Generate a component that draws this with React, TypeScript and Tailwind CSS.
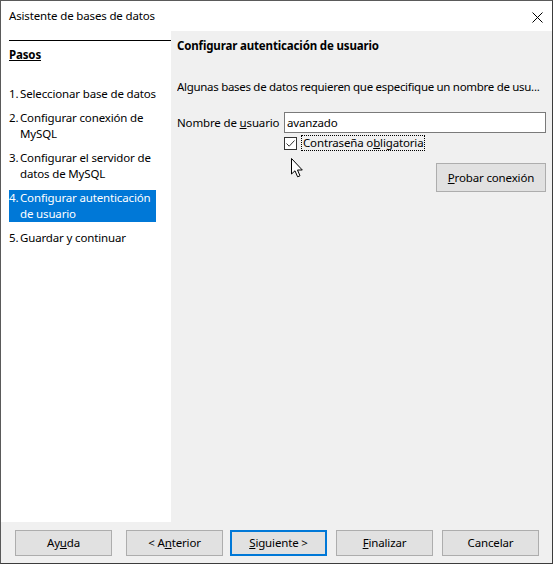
import React from 'react';

const font = { fontFamily: '"Noto Sans", "Open Sans", sans-serif' };

function Btn({ children, primary = false, className = '' }: { children: React.ReactNode; primary?: boolean; className?: string }) {
    return (
        <div
            className={`h-[26px] w-[97px] shrink-0 flex items-center justify-center bg-[#e1e1e1] text-black ${primary ? 'border-2 border-[#0078d7]' : 'border border-[#adadad]'} ${className}`}
        >
            {children}
        </div>
    );
}

const steps: { n: string; lines: string[]; active?: boolean }[] = [
    { n: '1.', lines: ['Seleccionar base de datos'] },
    { n: '2.', lines: ['Configurar conexión de', 'MySQL'] },
    { n: '3.', lines: ['Configurar el servidor de', 'datos de MySQL'] },
    { n: '4.', lines: ['Configurar autenticación', 'de usuario'], active: true },
    { n: '5.', lines: ['Guardar y continuar'] },
];

export default function App() {
    return (
        <div
            className="w-[553px] h-[564px] flex flex-col bg-white border border-[#5a5a5a] border-r-[#3c3c3c] border-b-[#3c3c3c] text-[11.5px] tracking-[-0.15px] leading-[16px] text-black overflow-hidden"
            style={font}
        >
            {/* Title bar */}
            <div className="h-[30px] shrink-0 flex items-center justify-between pl-[8px] pr-[9px] bg-white">
                <span>Asistente de bases de datos</span>
                <svg width="11" height="11" viewBox="0 0 11 11" className="mt-[2px]">
                    <path d="M0.5 0.5 L10.5 10.5 M10.5 0.5 L0.5 10.5" stroke="#000" strokeWidth="1" />
                </svg>
            </div>

            {/* Body */}
            <div className="flex-1 flex min-h-0">
                {/* Steps panel */}
                <div className="w-[170px] shrink-0 bg-white pl-[8px] flex flex-col">
                    <div className="mt-[9px] h-px bg-black" />
                    <div className="mt-[6px] font-bold underline">Pasos</div>
                    <div className="mt-[23px] w-[147px] flex flex-col gap-[8px]">
                        {steps.map((s) => (
                            <div key={s.n} className={`flex ${s.active ? 'bg-[#0078d7] text-white' : ''}`}>
                                <span className="w-[11px] shrink-0">{s.n}</span>
                                <div className="flex flex-col whitespace-nowrap">
                                    {s.lines.map((l) => (
                                        <span key={l}>{l}</span>
                                    ))}
                                </div>
                            </div>
                        ))}
                    </div>
                </div>

                {/* Content panel */}
                <div className="flex-1 min-w-0 bg-[#f0f0f0] pl-[6px] pr-[6px] pt-[7px] flex flex-col relative">
                    <div className="font-bold">Configurar autenticación de usuario</div>
                    <div className="mt-[25px] whitespace-nowrap overflow-hidden tracking-[-0.3px]">
                        Algunas bases de datos requieren que especifique un nombre de usu...
                    </div>
                    <div className="mt-[17px] flex items-center">
                        <span className="w-[107px] shrink-0 whitespace-nowrap">
                            Nombre de <span className="underline">u</span>suario
                        </span>
                        <div className="flex-1 min-w-0 h-[21px] bg-white border border-[#7a7a7a] flex items-center pl-[2px]">
                            avanzado
                        </div>
                    </div>
                    <div className="mt-[2px] ml-[107px] flex items-center h-[16px]">
                        <div className="w-[13px] h-[13px] shrink-0 bg-white border border-[#333] flex items-center justify-center">
                            <svg width="11" height="11" viewBox="0 0 11 11">
                                <path d="M1.5 5.5 L4.2 8.2 L9.5 2.5" stroke="#333" strokeWidth="1" fill="none" />
                            </svg>
                        </div>
                        <div className="ml-[4px] h-[16px] flex items-center border border-dotted border-black px-px whitespace-nowrap">
                            Contraseña o<span className="underline">b</span>ligatoria
                        </div>
                    </div>
                    <div className="mt-[12px] flex justify-end">
                        <div className="h-[29px] w-[110px] flex items-center justify-center bg-[#e1e1e1] border border-[#adadad] whitespace-nowrap">
                            <span className="underline">P</span>robar conexión
                        </div>
                    </div>

                    {/* Mouse cursor */}
                    <svg width="13" height="20" viewBox="0 0 13 20" className="absolute left-[120px] top-[127px]">
                        <path d="M0.5 0.5 L0.5 16 L4 12.8 L6.6 18.8 L9 17.8 L6.5 12 L11.3 12 Z" fill="#fff" stroke="#000" strokeWidth="1" strokeLinejoin="round" />
                    </svg>
                </div>
            </div>

            {/* Button bar */}
            <div className="h-[41px] shrink-0 bg-[#f0f0f0] flex items-center pl-[14px]">
                <Btn>Ay<span className="underline">u</span>da</Btn>
                <Btn className="ml-[14px]">&lt; A<span className="underline">n</span>terior</Btn>
                <Btn primary className="ml-[7px]"><span className="underline">S</span>iguiente &gt;</Btn>
                <Btn className="ml-[9px]"><span className="underline">F</span>inalizar</Btn>
                <Btn className="ml-[9px]">Cancelar</Btn>
            </div>
        </div>
    );
}
